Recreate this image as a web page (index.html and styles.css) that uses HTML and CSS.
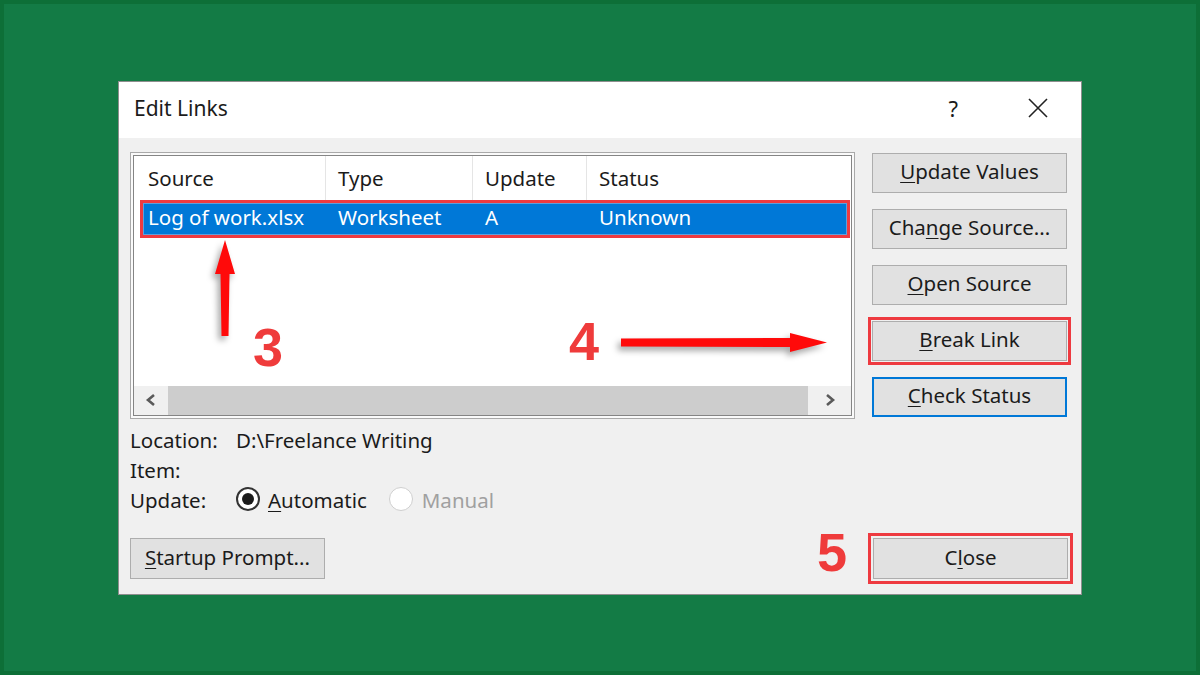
FILE: index.html
```html
<!DOCTYPE html>
<html lang="en">

<head>
	<meta charset="UTF-8">
	<meta name="viewport" content="width=device-width, initial-scale=1.0">
	<title>Edit Links</title>
	<link rel="stylesheet" href="styles.css">
</head>

<body>

	<div class="dialog">
		<div class="titlebar">
			<span class="title">Edit Links</span>
			<span class="help">?</span>
			<svg class="close-x" width="20" height="20" viewBox="0 0 20 20">
				<path d="M1 1 L19 19 M19 1 L1 19" stroke="#222" stroke-width="1.6" fill="none" />
			</svg>
		</div>

		<div class="dialog-body">
			<div class="main">
				<div class="list">
					<div class="list-inner">
						<div class="list-header">
							<div class="col">Source</div>
							<div class="col">Type</div>
							<div class="col">Update</div>
							<div class="col">Status</div>
						</div>
						<div class="list-row selected">
							<div class="cell">Log of work.xlsx</div>
							<div class="cell">Worksheet</div>
							<div class="cell">A</div>
							<div class="cell">Unknown</div>
						</div>
						<div class="list-space"></div>
						<div class="hscroll">
							<div class="hscroll-btn left">
								<svg width="12" height="14" viewBox="0 0 12 14">
									<path d="M9 2 L3 7 L9 12" stroke="#5a5a5a" stroke-width="2.6" fill="none" />
								</svg>
							</div>
							<div class="hscroll-thumb"></div>
							<div class="hscroll-btn right">
								<svg width="12" height="14" viewBox="0 0 12 14">
									<path d="M3 2 L9 7 L3 12" stroke="#5a5a5a" stroke-width="2.6" fill="none" />
								</svg>
							</div>
						</div>
					</div>
				</div>

				<div class="actions">
					<button class="btn"><u>U</u>pdate Values</button>
					<button class="btn">Cha<u>n</u>ge Source...</button>
					<button class="btn"><u>O</u>pen Source</button>
					<button class="btn marked"><u>B</u>reak Link</button>
					<button class="btn focused"><u>C</u>heck Status</button>
				</div>
			</div>

			<div class="info">
				<div class="info-line">
					<span class="info-label">Location:</span>
					<span>D:\Freelance Writing</span>
				</div>
				<div class="info-line">
					<span class="info-label">Item:</span>
				</div>
				<div class="info-line">
					<span class="info-label">Update:</span>
					<span class="radio checked"></span>
					<span class="radio-text"><u>A</u>utomatic</span>
					<span class="radio disabled"></span>
					<span class="radio-text disabled">Manual</span>
				</div>
			</div>

			<div class="footer">
				<button class="btn"><u>S</u>tartup Prompt...</button>
				<button class="btn marked wide-mark">C<u>l</u>ose</button>
			</div>
		</div>
	</div>

	<!-- annotation layer drawn over the screenshot -->
	<svg class="annotations" width="1200" height="675" viewBox="0 0 1200 675">
		<g class="arrow">
			<path d="M225 240 L235 274 L229.5 274 L228.5 336 L221.5 336 L220.5 274 L215 274 Z" />
			<path d="M621 338.5 L790 338 L790 333 L827 342.5 L790 352 L790 347 L621 346.5 Z" />
		</g>
		<text class="step" x="253" y="366">3</text>
		<text class="step" x="569" y="360">4</text>
		<text class="step" x="817" y="571">5</text>
	</svg>

</body>

</html>
```

FILE: styles.css
```css
body {
	font-family: "Noto Sans", "Open Sans", sans-serif;
	margin: 0;
	width: 1200px;
	height: 675px;
	box-sizing: border-box;
	border: 4px solid #0d6f37;
	background-color: #137b45;
	display: flex;
	justify-content: center;
	align-items: center;
	position: relative;
	color: #1b1b1b;
}

.dialog {
	width: 964px;
	height: 514px;
	box-sizing: border-box;
	border: 1px solid #8e8e8e;
	background: #f0f0f0;
	display: flex;
	flex-direction: column;
}

.titlebar {
	height: 56px;
	box-sizing: border-box;
	background: #ffffff;
	display: flex;
	align-items: center;
	padding-left: 15px;
	padding-bottom: 4px;
}

.title {
	font-size: 21px;
}

.help {
	margin-left: auto;
	margin-right: 70px;
	font-size: 22px;
}

.close-x {
	margin-right: 33px;
}

.dialog-body {
	flex: 1;
	padding: 14px 13px 15px 11px;
	display: flex;
	flex-direction: column;
	font-size: 20.5px;
}

.main {
	display: flex;
	gap: 17px;
}

/* --- List view --- */
.list {
	width: 725px;
	height: 267px;
	box-sizing: border-box;
	border: 1px solid #a9a9a9;
	padding: 2px;
	background: #fafafa;
}

.list-inner {
	height: 100%;
	box-sizing: border-box;
	border: 1px solid #858585;
	background: #ffffff;
	display: flex;
	flex-direction: column;
}

.list-header {
	height: 46px;
	display: grid;
	grid-template-columns: 191px 147px 114px 1fr;
}

.list-header .col {
	display: flex;
	align-items: center;
	padding-left: 12px;
	padding-bottom: 1px;
	border-left: 1px solid #e5e5e5;
}

.list-header .col:first-child {
	padding-left: 14px;
	border-left: none;
}

.list-row {
	height: 32px;
	box-sizing: border-box;
	margin: 1px 4px 0 9px;
	padding-bottom: 3px;
	display: grid;
	grid-template-columns: 182px 147px 114px 1fr;
	align-items: center;
}

.list-row .cell {
	padding-left: 13px;
}

.list-row .cell:first-child {
	padding-left: 5px;
}

.list-row.selected {
	background: #0078d7;
	color: #ffffff;
	outline: 3px solid #ee3a40;
	box-shadow: inset 0 0 0 1px #5d9fdc;
}

.list-space {
	flex: 1;
}

.hscroll {
	height: 29px;
	display: flex;
	background: #f0f0f0;
}

.hscroll-btn {
	display: flex;
	align-items: center;
	justify-content: center;
}

.hscroll-btn.left {
	width: 34px;
}

.hscroll-btn.right {
	flex: 1;
}

.hscroll-thumb {
	width: 640px;
	background: #cdcdcd;
}

/* --- Buttons --- */
.actions {
	width: 195px;
	padding-top: 1px;
	display: flex;
	flex-direction: column;
	gap: 16px;
}

.btn {
	height: 40px;
	width: 195px;
	box-sizing: border-box;
	background: #e1e1e1;
	border: 1px solid #adadad;
	font-family: inherit;
	font-size: 20.5px;
	color: #1b1b1b;
	padding: 0 0 3px;
}

.btn u,
.radio-text u {
	text-underline-offset: 3px;
	text-decoration-thickness: 1px;
}

.btn.marked {
	outline: 3px solid #ee3a40;
	outline-offset: 1px;
}

.btn.wide-mark {
	outline-offset: 2px;
}

.btn.focused {
	border: 2px solid #0078d7;
}

/* --- Details --- */
.info {
	margin-top: 6px;
}

.info-line {
	height: 30px;
	display: flex;
	align-items: center;
}

.info-label {
	width: 106px;
}

.radio {
	width: 24px;
	height: 24px;
	box-sizing: border-box;
	border-radius: 50%;
	border: 2px solid #333333;
	background: #ffffff;
	display: flex;
	align-items: center;
	justify-content: center;
	margin-right: 8px;
	margin-top: -2px;
}

.radio.checked::after {
	content: "";
	width: 12px;
	height: 12px;
	border-radius: 50%;
	background: #1b1b1b;
}

.radio.disabled {
	border: 1px solid #cfcfcf;
	margin-left: 22px;
	margin-right: 9px;
}

.radio-text.disabled {
	color: #a0a0a0;
}

.footer {
	margin-top: 23px;
	display: flex;
	justify-content: space-between;
}

.footer .btn {
	height: 41px;
}

/* --- Annotations --- */
.annotations {
	position: absolute;
	top: -4px;
	left: -4px;
	pointer-events: none;
}

.arrow {
	fill: #ff0a0a;
	filter: drop-shadow(-3px 4px 3px rgba(0, 0, 0, 0.35));
}

.step {
	font-family: "Liberation Sans", Arial, sans-serif;
	font-weight: 700;
	font-size: 54px;
	fill: #ef3b3b;
}
```
